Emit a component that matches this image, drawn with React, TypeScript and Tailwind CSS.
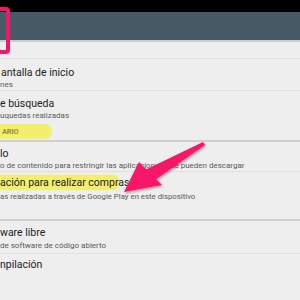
import React from "react";

const font = { fontFamily: "Roboto, 'Liberation Sans', sans-serif" };

function Sep({ strong }: { strong?: boolean }) {
  return strong ? (
    <div className="h-[2px] bg-[#cfcfcf]" />
  ) : (
    <div className="h-px bg-[#e0e0e0]" />
  );
}

export default function App() {
  return (
    <div className="relative w-[300px] h-[300px] overflow-hidden bg-[#eeeeee]" style={font}>
      <div className="h-[12px] bg-black" />
      <div className="h-[28px] bg-[#465b66]" />
      <div className="h-[2px] bg-[#c9cccd]" />
      <div className="h-[16px]" />
      <Sep />
      {/* Pantalla de inicio */}
      <div className="h-[31px] pl-px pt-[7px] flex flex-col">
        <div className="text-[10.5px] leading-[13px] text-[#222]">antalla de inicio</div>
        <div className="text-[8px] leading-[10px] text-[#5a5a5a] mt-[1px] -ml-px">nes</div>
      </div>
      <Sep />
      {/* búsqueda */}
      <div className="h-[32px] pt-[6px] flex flex-col">
        <div className="text-[10.5px] leading-[13px] text-[#222]">e búsqueda</div>
        <div className="text-[8px] leading-[10px] text-[#5a5a5a] mt-[1px]">uquedas realizadas</div>
      </div>
      {/* section header */}
      <div className="h-[17px] flex items-center">
        <div className="h-[15px] w-[52px] bg-[#f3ef6c] rounded-r-full flex items-center pl-[2px]">
          <span className="text-[7.5px] font-bold text-[#8f8f32] tracking-tight">ARIO</span>
        </div>
      </div>
      <Sep strong />
      {/* lo */}
      <div className="h-[29px] pt-[5px] flex flex-col">
        <div className="text-[10.5px] leading-[13px] text-[#222]">lo</div>
        <div className="text-[8px] leading-[10px] text-[#5a5a5a] mt-[1px] whitespace-nowrap">
          o de contenido para restringir las aplicaciones que pueden descargar
        </div>
      </div>
      <Sep />
      {/* compras */}
      <div className="h-[47px] pt-[3px] flex flex-col">
        <div className="h-[15px] w-[120px] bg-[#f3ef6c] rounded-r-full flex items-center">
          <span className="text-[10.5px] leading-[13px] text-[#222] whitespace-nowrap">ación para realizar compras</span>
        </div>
        <div className="text-[7.8px] leading-[10px] text-[#5a5a5a] mt-[2px] whitespace-nowrap">
          as realizadas a través de Google Play en este dispositivo
        </div>
      </div>
      <Sep strong />
      {/* software libre */}
      <div className="h-[32px] pt-[5px] flex flex-col">
        <div className="text-[10.5px] leading-[13px] text-[#222]">ware libre</div>
        <div className="text-[8px] leading-[10px] text-[#5a5a5a] mt-[2px] whitespace-nowrap">de software de código abierto</div>
      </div>
      <Sep />
      <div className="pt-[4px]">
        <div className="text-[10.5px] leading-[13px] text-[#222]">npilación</div>
      </div>

      {/* pink rectangle */}
      <div className="absolute left-[-20px] top-[7px] w-[30px] h-[47px] border-[4px] border-[#f8146a] rounded-[4px]" />

      {/* arrow */}
      <svg className="absolute left-0 top-0" width="300" height="300" viewBox="0 0 300 300">
        <defs>
          <filter id="sh" x="-20%" y="-20%" width="140%" height="140%">
            <feDropShadow dx="1" dy="1.5" stdDeviation="1.2" floodColor="#000" floodOpacity="0.35" />
          </filter>
        </defs>
        <g filter="url(#sh)" fill="#f8146a">
          <polygon points="203,142 205,145 155,180 145,170" />
          <polygon points="124,192 139,162 162,185" />
        </g>
      </svg>
    </div>
  );
}
